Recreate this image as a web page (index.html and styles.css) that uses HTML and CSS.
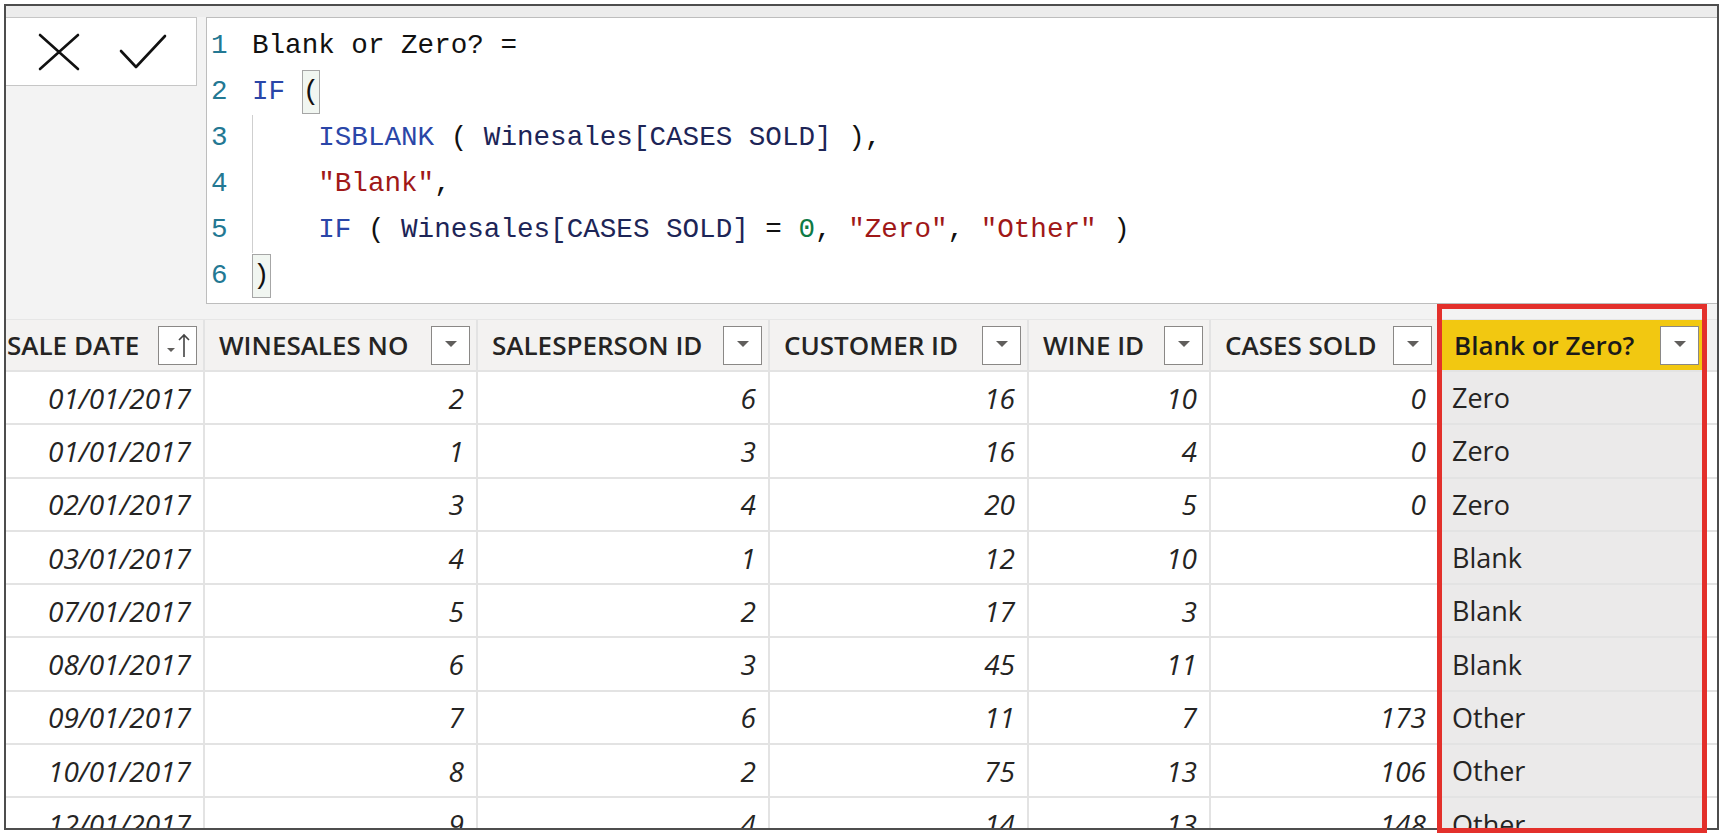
FILE: index.html
```html
<!DOCTYPE html>
<html>
<head>
<meta charset="utf-8">
<link rel="stylesheet" href="styles.css">
</head>
<body>
<div class="page">
  <div class="frame">
    <div class="topstrip"></div>
    <div class="formula-bar">
      <div class="buttons">
        <svg class="icon-x" width="42" height="38" viewBox="0 0 42 38"><path d="M2 2 L40 36 M40 2 L2 36" stroke="#111" stroke-width="2.6" fill="none" stroke-linecap="round"/></svg>
        <svg class="icon-check" width="48" height="36" viewBox="0 0 48 36"><path d="M2 17 L17 33 L46 2" stroke="#111" stroke-width="2.6" fill="none" stroke-linecap="round" stroke-linejoin="round"/></svg>
      </div>
      <div class="editor">
        <div class="line"><span class="ln">1</span><span class="code">Blank or Zero? =</span></div>
        <div class="line"><span class="ln">2</span><span class="code"><span class="kw">IF</span> <span class="brk">(</span></span></div>
        <div class="line"><span class="ln">3</span><span class="code guide">    <span class="kw">ISBLANK</span> ( <span class="col">Winesales[CASES SOLD]</span> ),</span></div>
        <div class="line"><span class="ln">4</span><span class="code guide">    <span class="str">"Blank"</span>,</span></div>
        <div class="line"><span class="ln">5</span><span class="code guide">    <span class="kw">IF</span> ( <span class="col">Winesales[CASES SOLD]</span> = <span class="num">0</span>, <span class="str">"Zero"</span>, <span class="str">"Other"</span> )</span></div>
        <div class="line"><span class="ln">6</span><span class="code"><span class="brk">)</span></span></div>
      </div>
    </div>
    <div class="grid">
      <div class="row head">
        <div class="cell c1 first"><span class="htext">SALE DATE</span><span class="dd"><svg width="38" height="38" viewBox="0 0 38 38"><path d="M8 22 L16 22 L12 26 Z" fill="#605e5c"/><path d="M25 9 L25 31 M20 14 L25 9 L30 14" stroke="#444" stroke-width="1.6" fill="none"/></svg></span></div>
        <div class="cell c2"><span class="htext">WINESALES NO</span><span class="dd"><i class="tri"></i></span></div>
        <div class="cell c3"><span class="htext">SALESPERSON ID</span><span class="dd"><i class="tri"></i></span></div>
        <div class="cell c4"><span class="htext">CUSTOMER ID</span><span class="dd"><i class="tri"></i></span></div>
        <div class="cell c5"><span class="htext">WINE ID</span><span class="dd"><i class="tri"></i></span></div>
        <div class="cell c6"><span class="htext">CASES SOLD</span><span class="dd"><i class="tri"></i></span></div>
        <div class="cell c7 sel"><span class="htext">Blank or Zero?</span><span class="dd"><i class="tri"></i></span></div>
      </div>
      <div class="row"><div class="cell c1 n">01/01/2017</div><div class="cell c2 n">2</div><div class="cell c3 n">6</div><div class="cell c4 n">16</div><div class="cell c5 n">10</div><div class="cell c6 n">0</div><div class="cell c7 t">Zero</div></div>
      <div class="row"><div class="cell c1 n">01/01/2017</div><div class="cell c2 n">1</div><div class="cell c3 n">3</div><div class="cell c4 n">16</div><div class="cell c5 n">4</div><div class="cell c6 n">0</div><div class="cell c7 t">Zero</div></div>
      <div class="row"><div class="cell c1 n">02/01/2017</div><div class="cell c2 n">3</div><div class="cell c3 n">4</div><div class="cell c4 n">20</div><div class="cell c5 n">5</div><div class="cell c6 n">0</div><div class="cell c7 t">Zero</div></div>
      <div class="row"><div class="cell c1 n">03/01/2017</div><div class="cell c2 n">4</div><div class="cell c3 n">1</div><div class="cell c4 n">12</div><div class="cell c5 n">10</div><div class="cell c6 n"></div><div class="cell c7 t">Blank</div></div>
      <div class="row"><div class="cell c1 n">07/01/2017</div><div class="cell c2 n">5</div><div class="cell c3 n">2</div><div class="cell c4 n">17</div><div class="cell c5 n">3</div><div class="cell c6 n"></div><div class="cell c7 t">Blank</div></div>
      <div class="row"><div class="cell c1 n">08/01/2017</div><div class="cell c2 n">6</div><div class="cell c3 n">3</div><div class="cell c4 n">45</div><div class="cell c5 n">11</div><div class="cell c6 n"></div><div class="cell c7 t">Blank</div></div>
      <div class="row"><div class="cell c1 n">09/01/2017</div><div class="cell c2 n">7</div><div class="cell c3 n">6</div><div class="cell c4 n">11</div><div class="cell c5 n">7</div><div class="cell c6 n">173</div><div class="cell c7 t">Other</div></div>
      <div class="row"><div class="cell c1 n">10/01/2017</div><div class="cell c2 n">8</div><div class="cell c3 n">2</div><div class="cell c4 n">75</div><div class="cell c5 n">13</div><div class="cell c6 n">106</div><div class="cell c7 t">Other</div></div>
      <div class="row"><div class="cell c1 n">12/01/2017</div><div class="cell c2 n">9</div><div class="cell c3 n">4</div><div class="cell c4 n">14</div><div class="cell c5 n">13</div><div class="cell c6 n">148</div><div class="cell c7 t">Other</div></div>
    </div>
  </div>
  <div class="highlight"></div>
</div>
</body>
</html>
```

FILE: styles.css
```css
html, body {
  margin: 0;
  padding: 0;
  background: #ffffff;
}
.page {
  position: relative;
  width: 1725px;
  height: 839px;
  overflow: hidden;
}
.frame {
  position: relative;
  margin: 4px 0 0 4px;
  width: 1715px;
  height: 826px;
  box-sizing: border-box;
  border: 2px solid #4d4d4d;
  background: #f3f3f3;
  overflow: hidden;
  display: flex;
  flex-direction: column;
}
.topstrip {
  height: 11px;
  flex: none;
  background: #ececec;
}
.formula-bar {
  flex: none;
  display: flex;
  align-items: flex-start;
  gap: 9px;
  height: 302px;
  box-sizing: border-box;
  padding-bottom: 15px;
  background: #f3f3f3;
}
.buttons {
  width: 191px;
  height: 69px;
  box-sizing: border-box;
  background: #ffffff;
  border: 1px solid #c6c6c6;
  border-left: none;
  display: flex;
  align-items: center;
  padding-left: 32px;
  gap: 39px;
}
.icon-x { display: block; margin-top: 1px; }
.icon-check { display: block; margin-top: 0px; }
.editor {
  flex: 1;
  height: 287px;
  box-sizing: border-box;
  background: #ffffff;
  border: 1px solid #bdbdbd;
  border-right: none;
  padding-top: 5px;
  font-family: "Liberation Mono", monospace;
  font-size: 27.6px;
  color: #111111;
}
.line {
  display: flex;
  height: 46px;
  line-height: 46px;
  white-space: pre;
}
.ln {
  width: 45px;
  padding-left: 4px;
  box-sizing: border-box;
  color: #237893;
  flex: none;
}
.code {
  white-space: pre;
}
.guide {
  box-shadow: inset 1px 0 0 #cfcfcf;
}
.kw { color: #2a46a8; }
.col { color: #1d2557; }
.str { color: #a01818; }
.num { color: #0e7a45; }
.brk {
  display: inline-block;
  height: 44px;
  line-height: 42px;
  box-sizing: border-box;
  border: 1px solid #a6a6a6;
  background: #f1f6f1;
  vertical-align: top;
  margin-top: 1px;
}
.grid {
  flex: 1;
  overflow: hidden;
  background: #ffffff;
  font-family: "Open Sans", "Noto Sans", sans-serif;
  color: #252423;
}
.row {
  display: flex;
  height: 53.3px;
  box-sizing: border-box;
  border-bottom: 2px solid #e3e3e3;
}
.row.head {
  background: #f3f2f1;
  border-top: 1px solid #e6e6e6;
  height: 53px;
}
.cell {
  flex: none;
  box-sizing: border-box;
  border-right: 2px solid #e3e3e3;
  display: flex;
  align-items: center;
  height: 100%;
}
.c1 { width: 199px; }
.c2 { width: 273px; }
.c3 { width: 292px; }
.c4 { width: 259px; }
.c5 { width: 182px; }
.c6 { width: 229px; }
.c7 { width: 265px; border-right: none; }
.head .cell {
  justify-content: space-between;
  padding: 0 6px 0 14px;
  font-weight: 600;
  font-size: 26px;
}
.head .cell.first {
  padding-left: 1px;
}
.head .sel {
  background: #f2c811;
  color: #1b1a19;
}
.dd {
  width: 39px;
  height: 39px;
  box-sizing: border-box;
  border: 1px solid #8a8886;
  background: #ffffff;
  display: flex;
  align-items: center;
  justify-content: center;
  flex: none;
}
.dd svg { display: block; margin: -1px; }
.tri {
  display: block;
  width: 0;
  height: 0;
  border-left: 6px solid transparent;
  border-right: 6px solid transparent;
  border-top: 6px solid #605e5c;
  margin-top: -3px;
}
.n {
  justify-content: flex-end;
  padding-right: 12px;
  font-style: italic;
  font-size: 28px;
}
.t {
  padding-left: 12px;
  font-size: 27px;
  background: #ebeaea;
}
.highlight {
  position: absolute;
  left: 1437px;
  top: 304px;
  width: 270px;
  height: 529px;
  box-sizing: border-box;
  border: 5px solid #e3302b;
}
```
